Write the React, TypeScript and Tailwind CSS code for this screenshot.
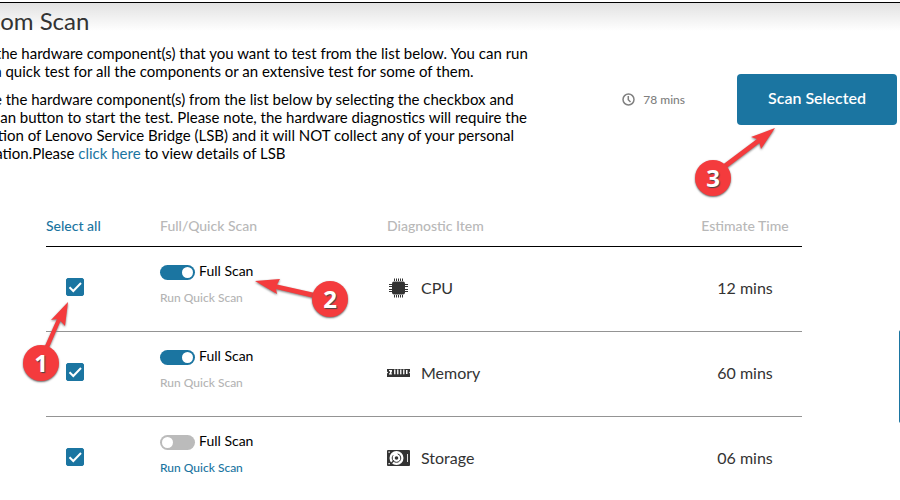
import { useState } from "react";
import type { ReactNode } from "react";

type Item = { name: string; time: string; full: boolean; icon: ReactNode };

function CpuIcon() {
  return (
    <svg width="24" height="20" viewBox="0 0 24 20" className="shrink-0" fill="#333" aria-hidden="true">
      <rect x="5" y="3.500" width="13" height="13" rx="2" />
      {[7, 9, 11, 13, 15].map((x) => (
        <g key={x}>
          <rect x={x} y="0.500" width="1" height="2.500" />
          <rect x={x} y="17" width="1" height="2.500" />
        </g>
      ))}
      {[6, 8, 11, 13].map((y) => (
        <g key={y}>
          <rect x="2" y={y} width="3" height="1" />
          <rect x="18" y={y} width="3" height="1" />
        </g>
      ))}
    </svg>
  );
}

function MemoryIcon() {
  return (
    <svg width="24" height="20" viewBox="0 0 24 20" className="shrink-0" fill="#333" aria-hidden="true">
      <path d="M0 6H23V8.500L22 9.500L23 10.500V14H0V10.500L1.200 9.500L0 8.500Z" />
      <path fill="#fff" d="M2 7H5V8.500L4.300 9.500L5 11.500H2V10.300H3V8.200H2Z" />
      {[7, 10, 13, 16].map((x) => (
        <rect key={x} x={x} y="6.500" width="1.500" height="4.800" fill="#e8e8e8" />
      ))}
      <rect x="19" y="7" width="1.500" height="4" fill="#fff" />
    </svg>
  );
}

function StorageIcon() {
  return (
    <svg width="24" height="20" viewBox="0 0 24 20" className="shrink-0" aria-hidden="true">
      <rect x="0" y="2" width="23" height="16" rx="1" fill="#333" />
      <circle cx="9.500" cy="10" r="7" fill="#fff" />
      <circle cx="9.500" cy="10" r="4.300" fill="none" stroke="#333" strokeWidth="1" strokeDasharray="16 5" />
      <circle cx="9.500" cy="10" r="1.800" fill="#333" />
      <path d="M7 12.500L4 15.500" stroke="#333" strokeWidth="1.200" />
      <rect x="1.500" y="3.500" width="1.300" height="1.300" fill="#fff" />
      <rect x="1.500" y="15" width="1.300" height="1.300" fill="#fff" />
      <path d="M20.500 6V14" fill="none" stroke="#ddd" strokeWidth="1" />
    </svg>
  );
}

const initialItems: Item[] = [
  { name: "CPU", time: "12 mins", full: true, icon: <CpuIcon /> },
  { name: "Memory", time: "60 mins", full: true, icon: <MemoryIcon /> },
  { name: "Storage", time: "06 mins", full: false, icon: <StorageIcon /> },
];

function Row({ item }: { item: Item }) {
  const [selected, setSelected] = useState(true);
  const [full, setFull] = useState(item.full);
  return (
    <tr className="h-[85px] border-b border-[#949494] last:border-b-0">
      <td className="pb-1 pl-5 align-middle">
        <label className="grid size-[18px]">
          <input
            type="checkbox"
            aria-label={`Select ${item.name}`}
            checked={selected}
            onChange={(e) => setSelected(e.target.checked)}
            className="col-start-1 row-start-1 size-[18px] appearance-none rounded-xs border border-[#1b75a1] checked:bg-[#1b75a1]"
          />
          <svg viewBox="0 0 18 18" className="pointer-events-none z-10 col-start-1 row-start-1 size-[18px]" aria-hidden="true">
            <path d="M3.500 9.200L7.300 13L15 5" fill="none" stroke="#fff" strokeWidth="2" />
          </svg>
        </label>
      </td>
      <td className="pt-[15px] align-top">
        <label className="flex items-center gap-1 text-sm leading-[18px] text-black">
          <input
            type="checkbox"
            role="switch"
            checked={full}
            onChange={(e) => setFull(e.target.checked)}
            className="mt-[3px] flex h-[15px] w-[35px] appearance-none items-center rounded-full bg-[#bbb] px-0.5 before:size-[11px] before:rounded-full before:bg-white checked:justify-end checked:bg-[#1b75a1]"
          />
          Full Scan
        </label>
        <button
          type="button"
          onClick={() => setFull(false)}
          className={full ? "mt-2.5 block text-xs font-medium leading-4 text-[#b4b4b4]" : "mt-2.5 block text-xs font-medium leading-4 text-[#1b75a1]"}
        >
          Run Quick Scan
        </button>
      </td>
      <td className="pb-0.5 align-middle">
        <div className="flex items-center gap-2.5 text-base text-[#333]">
          {item.icon}
          {item.name}
        </div>
      </td>
      <td className="pb-0.5 text-center align-middle text-base text-[#333]">{item.time}</td>
    </tr>
  );
}

const badge =
  "absolute grid size-9 place-items-center rounded-full bg-[#f43b3d] font-['Open_Sans',sans-serif] text-2xl font-bold leading-none text-white shadow-[0_1px_2px_#666] [text-shadow:1px_1px_1px_#444]";

function Annotations() {
  return (
    <div className="pointer-events-none absolute inset-0">
      <svg width="900" height="500" viewBox="0 0 900 500" className="absolute left-0 top-0 drop-shadow-[0_1px_1px_#777]" fill="#f43b3d" aria-hidden="true">
        <path d="M68 302L65 326L60.500 321L48 350L44 348L57 319L51 320Z" />
        <path d="M255 281L280 279L277 284.500L315 293L314 298L276 289L277 294Z" />
        <path d="M775 128L761 149L759.500 143L724 170L721 166L757 139L751 137Z" />
      </svg>
      <span className={`${badge} left-[23px] top-[345px]`}>1</span>
      <span className={`${badge} left-[312px] top-[281px]`}>2</span>
      <span className={`${badge} left-[695px] top-[160px]`}>3</span>
    </div>
  );
}

export default function App() {
  return (
    <div className="relative h-screen overflow-hidden bg-white pt-0.5 font-[Lato,sans-serif] text-black">
      <div className="border-t border-black bg-linear-to-b from-[#e2e2e2] to-white to-[28px]">
        <header className="flex items-start justify-between pr-[3px]">
          <section className="-ml-12 shrink-0 whitespace-nowrap pt-[3px] text-[15px] leading-[18px]">
            <h1 className="text-2xl leading-[30px] text-[#333]">Custom Scan</h1>
            <p className="mt-2">
              Select the hardware component(s) that you want to test from the list below. You can run
              <br />
              either a quick test for all the components or an extensive test for some of them.
            </p>
            <p className="mt-2.5">
              Choose the hardware component(s) from the list below by selecting the checkbox and
              <br />
              click Scan button to start the test. Please note, the hardware diagnostics will require the
              <br />
              installation of Lenovo Service Bridge (LSB) and it will NOT collect any of your personal
              <br />
              information.Please <a href="#lsb" className="text-[#1b75a1]">click here</a> to view details of LSB
            </p>
          </section>
          <div className="flex items-center gap-[52px] pt-[71px]">
            <div className="flex items-center gap-2 text-xs font-medium text-[#808080]">
              <svg width="13" height="13" viewBox="0 0 13 13" fill="none" stroke="#808080" strokeWidth="1.500" aria-hidden="true">
                <circle cx="6.500" cy="6.500" r="5.500" />
                <path d="M6.300 3V6.700L8.500 9" />
              </svg>
              78 mins
            </div>
            <button type="button" className="h-[51px] w-40 rounded-sm bg-[#1b75a1] pb-1 text-base font-semibold text-white">
              Scan Selected
            </button>
          </div>
        </header>
      </div>
      <main className="mt-[54px] pl-[46px] pr-[98px]">
        <table className="w-full table-fixed border-collapse text-left">
          <colgroup>
            <col className="w-[114px]" />
            <col className="w-[227px]" />
            <col />
            <col className="w-[114px]" />
          </colgroup>
          <thead>
            <tr className="h-[30px] border-b border-black align-top text-sm text-[#b8b8b8]">
              <th className="p-0 font-medium"><button type="button" className="font-medium text-[#1b75a1]">Select all</button></th>
              <th className="p-0 font-medium">Full/Quick Scan</th>
              <th className="p-0 font-medium">Diagnostic Item</th>
              <th className="p-0 text-center font-medium">Estimate Time</th>
            </tr>
          </thead>
          <tbody>
            {initialItems.map((item) => <Row key={item.name} item={item} />)}
          </tbody>
        </table>
      </main>
      <button type="button" aria-label="Feedback" className="absolute -right-5 top-[330px] h-[93px] w-[21px] rounded-l-xs bg-[#1b75a1]" />
      <Annotations />
    </div>
  );
}
